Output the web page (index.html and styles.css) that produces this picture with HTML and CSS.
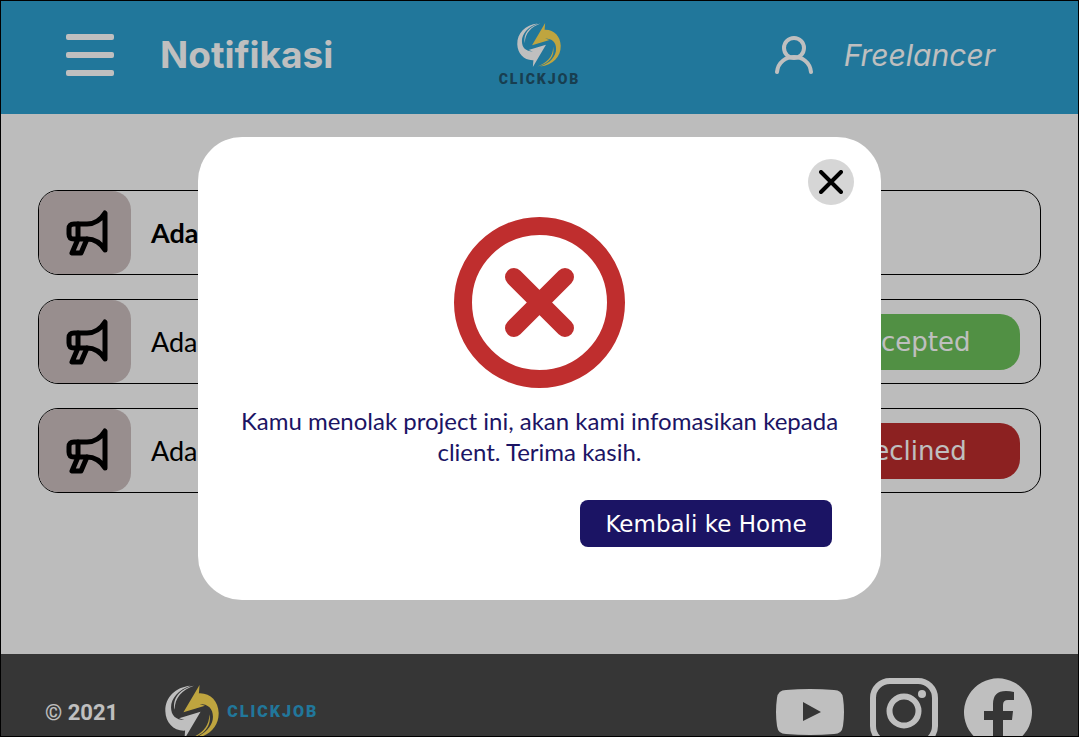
FILE: index.html
```html
<!DOCTYPE html>
<html lang="id">
<head>
    <meta charset="UTF-8">
    <meta name="viewport" content="width=device-width, initial-scale=1.0">
    <title>Notifikasi - Clickjob</title>
    <link rel="stylesheet" href="styles.css">
</head>
<body>
    <!-- shared icons -->
    <svg class="sprite" aria-hidden="true">
        <symbol id="logo" viewBox="0 0 161 161">
            <g id="bolt">
                <path d="M76 2C30 6 0 38 1 78C2 112 26 138 60 136L58 161L106 80L42 99L58 104C32 104 18 90 18 66C18 40 40 14 76 2Z"/>
                <path d="M86 2C52 14 28 38 29 74C20 40 46 10 86 2Z"/>
            </g>
            <use href="#bolt" class="bolt-yellow" transform="rotate(180 80.5 80.5)"/>
        </symbol>
        <symbol id="megaphone" viewBox="0 0 42 46">
            <g fill="none" stroke="currentColor" stroke-width="5" stroke-linecap="round" stroke-linejoin="round">
                <path d="M39 3V40C34 32 28 29 21 29H8C4 29 3 27 3 24V19C3 16 4 14 8 14H21C28 14 34 11 39 3Z"/>
                <path d="M12 14V29M12 29L6 43H15L21 29"/>
            </g>
        </symbol>
    </svg>

    <div class="page">
        <header class="navbar">
            <div class="navbar-left">
                <button type="button" class="menu-btn" aria-label="Menu">
                    <span></span>
                    <span></span>
                    <span></span>
                </button>
                <h1>Notifikasi</h1>
            </div>
            <a href="#" class="brand">
                <svg class="brand-mark"><use href="#logo"/></svg>
                <span class="brand-name">CLICKJOB</span>
            </a>
            <a href="#" class="user">
                <svg viewBox="0 0 38 38" fill="none" stroke="currentColor" stroke-width="4" stroke-linecap="round">
                    <circle cx="19" cy="12" r="10"/>
                    <path d="M2 36C4 16 34 16 36 36"/>
                </svg>
                <span>Freelancer</span>
            </a>
        </header>

        <main class="notifications">
            <div class="notification unread">
                <div class="tile"><svg><use href="#megaphone"/></svg></div>
                <p>Ada</p>
            </div>
            <div class="notification">
                <div class="tile"><svg><use href="#megaphone"/></svg></div>
                <p>Ada</p>
                <button type="button" class="status accepted">Accepted</button>
            </div>
            <div class="notification">
                <div class="tile"><svg><use href="#megaphone"/></svg></div>
                <p>Ada</p>
                <button type="button" class="status declined">Declined</button>
            </div>
        </main>

        <footer class="footer">
            <p>© 2021</p>
            <a href="#" class="footer-brand">
                <svg class="brand-mark"><use href="#logo"/></svg>
                <span class="brand-name">CLICKJOB</span>
            </a>
            <div class="social">
                <a href="#" aria-label="YouTube">
                    <svg viewBox="0 0 68 68" fill="currentColor">
                        <path fill-rule="evenodd" d="M10 12Q34 10 58 12Q66 12 67 20Q69 34 67 48Q66 56 58 56Q34 58 10 56Q2 56 1 48Q-1 34 1 20Q2 12 10 12ZM27 24V43L45 34Z"/>
                    </svg>
                </a>
                <a href="#" aria-label="Instagram">
                    <svg viewBox="0 0 68 68" fill="none" stroke="currentColor" stroke-width="6">
                        <rect x="3" y="3" width="62" height="62" rx="17"/>
                        <circle cx="34" cy="33" r="14.5"/>
                        <circle cx="52" cy="16" r="4" fill="currentColor" stroke="none"/>
                    </svg>
                </a>
                <a href="#" aria-label="Facebook">
                    <svg viewBox="0 0 68 68" fill="currentColor">
                        <path d="M29 68A34 34 0 1 1 39 68V42H48L49 33H39V27Q39 22 44 22H50V14Q46 13 42 13Q29 13 29 26V33H20V42H29Z"/>
                    </svg>
                </a>
            </div>
        </footer>
    </div>

    <div class="overlay">
        <div class="modal" role="dialog" aria-modal="true" aria-labelledby="modalText">
            <button type="button" class="close-btn" aria-label="Tutup">
                <svg viewBox="0 0 24 24" fill="none" stroke="currentColor" stroke-width="4" stroke-linecap="round">
                    <path d="M2 2L22 22M22 2L2 22"/>
                </svg>
            </button>
            <svg class="modal-icon" viewBox="0 0 171 171" fill="none" stroke="currentColor" stroke-width="18">
                <circle cx="85.5" cy="85.5" r="76.5"/>
                <path d="M60 60L111 111M111 60L60 111" stroke-linecap="round"/>
            </svg>
            <p id="modalText">Kamu menolak project ini, akan kami infomasikan kepada client. Terima kasih.</p>
            <button type="button" class="home-btn">Kembali ke Home</button>
        </div>
    </div>
</body>
</html>
```
FILE: styles.css
```css
* {
    box-sizing: border-box;
}
body {
    font-family: Lato, sans-serif;
    margin: 0;
    color: #000;
}
h1, p {
    margin: 0;
}
a {
    color: inherit;
    text-decoration: none;
}
button {
    border: none;
    padding: 0;
    cursor: pointer;
}
svg {
    display: block;
}
.sprite {
    position: absolute;
    width: 0;
    height: 0;
}
.page {
    height: 100vh;
    overflow: hidden;
    border: 1px solid #000;
    background-color: #fbfbfb;
}
/* header */
.navbar {
    display: grid;
    grid-template-columns: 1fr auto 1fr;
    align-items: center;
    height: 113px;
    padding: 0 65px 6px;
    background-color: #2d9fcf;
    color: white;
    font-family: Inter, sans-serif;
}
.navbar-left {
    display: flex;
    align-items: center;
    gap: 46px;
}
.navbar h1 {
    font-size: 37px;
    line-height: 44px;
}
.menu-btn {
    display: flex;
    flex-direction: column;
    gap: 12px;
    width: 48px;
    background: none;
}
.menu-btn span {
    height: 6px;
    border-radius: 2px;
    background-color: white;
}
.brand {
    display: flex;
    flex-direction: column;
    align-items: center;
    gap: 4px;
}
.brand-mark {
    width: 44px;
    height: 44px;
    fill: white;
}
.bolt-yellow {
    fill: #ffdc54;
}
.brand-name {
    font-family: Roboto, sans-serif;
    font-size: 14px;
    font-weight: 900;
    line-height: 16px;
    letter-spacing: 2px;
    color: #20536b;
}
.user {
    display: flex;
    align-items: center;
    justify-content: flex-end;
    gap: 31px;
    padding-right: 18px;
    font-size: 30px;
    font-style: italic;
}
.user svg {
    width: 38px;
    height: 38px;
}
/* list */
.notifications {
    display: flex;
    flex-direction: column;
    gap: 24px;
    padding: 76px 37px 161px;
}
.notification {
    display: flex;
    align-items: center;
    height: 85px;
    padding-right: 20px;
    border: 1px solid #000;
    border-radius: 20px;
    font-size: 27px;
}
.notification p {
    flex: 1;
    margin-left: 20px;
}
.unread p {
    font-weight: bold;
}
.tile {
    display: flex;
    align-items: center;
    justify-content: center;
    align-self: stretch;
    width: 92px;
    padding-left: 4px;
    border-radius: 19px;
    background-color: #cbbebe;
}
.tile svg {
    width: 42px;
    height: 46px;
}
.status {
    width: 220px;
    height: 56px;
    border-radius: 20px;
    color: white;
    font-family: "DejaVu Sans", sans-serif;
    font-size: 26px;
}
.accepted {
    background-color: #6dc05b;
}
.declined {
    background-color: #bb2d2d;
}
/* footer */
.footer {
    display: flex;
    align-items: center;
    height: 118px;
    padding: 0 46px 2px 44px;
    background-color: #494949;
    color: white;
}
.footer p {
    font-family: Roboto, sans-serif;
    font-size: 22px;
    font-weight: bold;
}
.footer-brand {
    display: flex;
    align-items: center;
    gap: 8px;
    margin-left: 47px;
}
.footer-brand .brand-mark {
    width: 54px;
    height: 54px;
}
.footer-brand .brand-name {
    font-size: 16px;
    color: #2d9fcf;
}
.social {
    display: flex;
    gap: 26px;
    margin-left: auto;
}
.social svg {
    width: 68px;
    height: 68px;
}
/* modal */
.overlay {
    position: fixed;
    inset: 0;
    display: flex;
    align-items: center;
    justify-content: center;
    background-color: rgba(0, 0, 0, 0.25);
}
.modal {
    position: relative;
    display: flex;
    flex-direction: column;
    align-items: center;
    width: 683px;
    max-width: 90%;
    padding: 80px 40px 53px;
    border-radius: 44px;
    background-color: white;
}
.close-btn {
    position: absolute;
    top: 22px;
    right: 27px;
    display: flex;
    align-items: center;
    justify-content: center;
    width: 46px;
    height: 46px;
    border-radius: 50%;
    background-color: #d6d6d6;
    color: #000;
}
.close-btn svg {
    width: 24px;
    height: 24px;
}
.modal-icon {
    width: 171px;
    height: 171px;
    color: #bf2e2e;
}
.modal p {
    margin: 17px 0 33px;
    color: #1b1464;
    font-size: 24px;
    line-height: 31px;
    text-align: center;
}
.home-btn {
    align-self: flex-end;
    width: 252px;
    height: 47px;
    margin-right: 9px;
    border-radius: 8px;
    background-color: #1b1464;
    color: white;
    font-family: "DejaVu Sans", sans-serif;
    font-size: 23px;
}
```
